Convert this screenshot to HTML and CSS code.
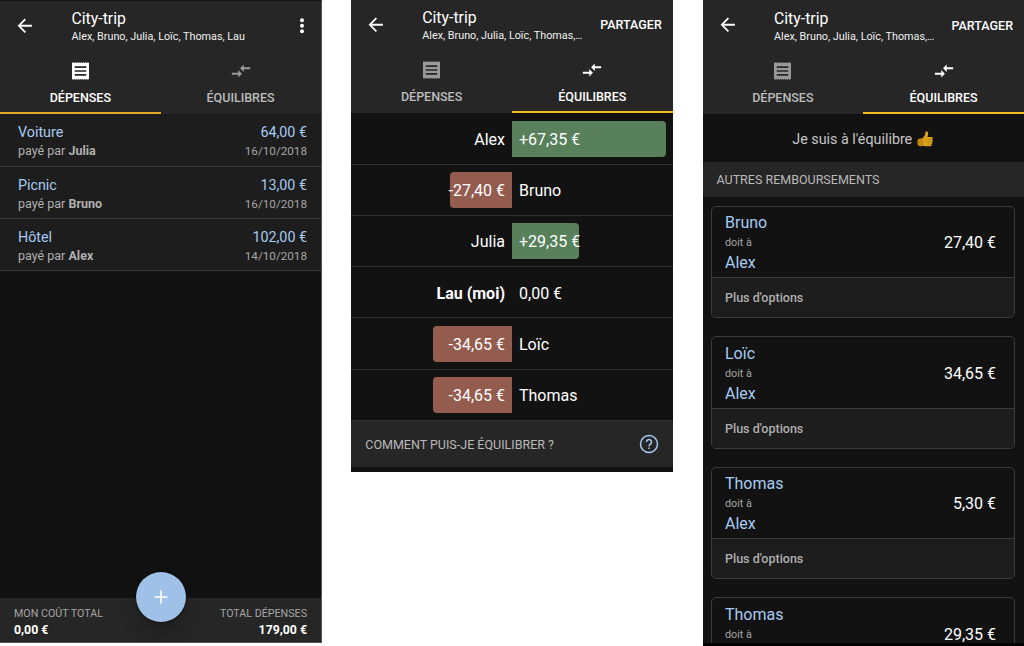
FILE: index.html
```html
<!DOCTYPE html>
<html lang="fr">
<head>
<meta charset="utf-8">
<title>City-trip</title>
<link rel="stylesheet" href="styles.css">
</head>
<body>
<svg class="sprite" aria-hidden="true">
  <symbol id="back" viewBox="0 0 24 24"><path d="M20 11H7.830l5.590-5.590L12 4l-8 8 8 8 1.410-1.410L7.830 13H20v-2z"/></symbol>
  <symbol id="receipt" viewBox="0 0 17 18"><path fill-rule="evenodd" d="M0 .3l.9.8.9-.8.9.8.9-.8 1 .8 1-.8 1 .8.9-.8 1 .8 1-.8 1 .8.9-.8 1 .8 1-.8 1 .8.9-.8.9.8.8-.8v17.400l-.8-.8-.9.8-.9-.8-1 .8-1-.8-1 .8-.9-.8-1 .8-1-.8-1 .8-.9-.8-1 .8-1-.8-1 .8-.9-.8-.9.8-.9-.8-.9.8zM2.700 4.300v1.600h11.600V4.300zM2.700 8.200v1.600h11.600V8.200zM2.700 12.100v1.600h11.600v-1.600z"/></symbol>
  <symbol id="arrows" viewBox="0 0 24 24"><path d="M9.010 14H2v2h7.010v3L13 15l-3.990-4v3zm5.980-1v-3H22V8h-7.010V5L11 9l3.990 4z"/></symbol>
</svg>
<main class="screens">
  <section class="phone phone-expenses">
    <header class="appbar">
      <svg class="back"><use href="#back"/></svg>
      <div class="heading"><h1>City-trip</h1><p>Alex, Bruno, Julia, Loïc, Thomas, Lau</p></div>
      <svg class="more" viewBox="0 0 6 16"><circle cx="3" cy="2.200" r="2"/><circle cx="3" cy="7.700" r="2"/><circle cx="3" cy="13.200" r="2"/></svg>
    </header>
    <nav class="tabs">
      <a class="tab active"><svg class="receipt"><use href="#receipt"/></svg><span>DÉPENSES</span></a>
      <a class="tab"><svg class="arrows"><use href="#arrows"/></svg><span>ÉQUILIBRES</span></a>
    </nav>
    <ul class="expenses">
      <li><div><h2>Voiture</h2><p>payé par <b>Julia</b></p></div><div class="right"><h2>64,00 €</h2><time>16/10/2018</time></div></li>
      <li><div><h2>Picnic</h2><p>payé par <b>Bruno</b></p></div><div class="right"><h2>13,00 €</h2><time>16/10/2018</time></div></li>
      <li><div><h2>Hôtel</h2><p>payé par <b>Alex</b></p></div><div class="right"><h2>102,00 €</h2><time>14/10/2018</time></div></li>
    </ul>
    <footer class="totals">
      <div><p>MON COÛT TOTAL</p><b>0,00 €</b></div>
      <button class="fab"><svg viewBox="0 0 14 14"><path d="M6.200.500h1.600v5.700h5.700v1.600H7.800v5.700H6.200V7.800H.500V6.200h5.700z"/></svg></button>
      <div class="right"><p>TOTAL DÉPENSES</p><b>179,00 €</b></div>
    </footer>
  </section>

  <section class="phone phone-balances">
    <header class="appbar">
      <svg class="back"><use href="#back"/></svg>
      <div class="heading"><h1>City-trip</h1><p>Alex, Bruno, Julia, Loïc, Thomas,…</p></div>
      <span class="share">PARTAGER</span>
    </header>
    <nav class="tabs">
      <a class="tab"><svg class="receipt"><use href="#receipt"/></svg><span>DÉPENSES</span></a>
      <a class="tab active"><svg class="arrows"><use href="#arrows"/></svg><span>ÉQUILIBRES</span></a>
    </nav>
    <ul class="balances">
      <li><span class="cell name">Alex</span><span class="cell"><span class="bar plus" style="width:153.500px">+67,35 €</span></span></li>
      <li><span class="cell"><span class="bar minus" style="width:62.500px">-27,40 €</span></span><span class="cell name">Bruno</span></li>
      <li><span class="cell name">Julia</span><span class="cell"><span class="bar plus" style="width:67px">+29,35 €</span></span></li>
      <li><span class="cell name me">Lau (moi)</span><span class="cell name">0,00 €</span></li>
      <li><span class="cell"><span class="bar minus" style="width:79px">-34,65 €</span></span><span class="cell name">Loïc</span></li>
      <li><span class="cell"><span class="bar minus" style="width:79px">-34,65 €</span></span><span class="cell name">Thomas</span></li>
    </ul>
    <div class="help"><span>COMMENT PUIS-JE ÉQUILIBRER ?</span>
      <svg viewBox="0 0 20 20"><circle cx="10" cy="10" r="8.500"/><path d="M7.500 8.100a2.500 2.500 0 1 1 4.200 1.800C10.600 10.700 10 11 10 12.300M10 13.500v1.500"/></svg>
    </div>
  </section>

  <section class="phone phone-refunds">
    <header class="appbar">
      <svg class="back"><use href="#back"/></svg>
      <div class="heading"><h1>City-trip</h1><p>Alex, Bruno, Julia, Loïc, Thomas,…</p></div>
      <span class="share">PARTAGER</span>
    </header>
    <nav class="tabs">
      <a class="tab"><svg class="receipt"><use href="#receipt"/></svg><span>DÉPENSES</span></a>
      <a class="tab active"><svg class="arrows"><use href="#arrows"/></svg><span>ÉQUILIBRES</span></a>
    </nav>
    <p class="settled">Je suis à l'équilibre
      <svg viewBox="0 0 16 16"><path fill="#d9a21b" d="M5.600 7.200C7 5.600 8 4.400 8.200 3 8.300 1.600 8.300.300 9.400.300c1.600 0 2 1.700 1.700 3.200l-.6 2.400h3.800c1.600 0 1.900 2 .7 2.500 1.200.5 1 2.200-.1 2.500.9.600.6 2-.4 2.300.6.900 0 2-1.100 2-2.800.2-5.600 0-7.400-.8z"/><path fill="#c08a12" d="M.800 8.300c1.500-.9 3.300-1.200 5.200-1v7.600c-1.800.4-3.500.3-5-.3C.2 12.500.2 10.400.800 8.300z"/><path fill="none" stroke="#a97812" stroke-width=".500" d="M10.600 8.400H15M10.600 10.900h4.300M10.600 13.200h3.900"/></svg>
    </p>
    <h3 class="section">AUTRES REMBOURSEMENTS</h3>
    <div class="cards">
      <article class="card"><div class="debt"><div><h2>Bruno</h2><p>doit à</p><h2>Alex</h2></div><strong>27,40 €</strong></div><div class="options">Plus d'options</div></article>
      <article class="card"><div class="debt"><div><h2>Loïc</h2><p>doit à</p><h2>Alex</h2></div><strong>34,65 €</strong></div><div class="options">Plus d'options</div></article>
      <article class="card"><div class="debt"><div><h2>Thomas</h2><p>doit à</p><h2>Alex</h2></div><strong>5,30 €</strong></div><div class="options">Plus d'options</div></article>
      <article class="card"><div class="debt"><div><h2>Thomas</h2><p>doit à</p></div><strong>29,35 €</strong></div></article>
    </div>
  </section>
</main>
</body>
</html>
```
FILE: styles.css
```css
* { box-sizing: border-box; margin: 0; padding: 0; }
body { width: 1024px; height: 646px; overflow: hidden; background: #fff; font-family: Roboto, "Liberation Sans", sans-serif; color: #fff; }
ul { list-style: none; }
h1, h2, h3 { font-weight: 400; }
.sprite { display: block; width: 0; height: 0; }
.screens { display: flex; align-items: flex-start; justify-content: space-between; height: 646px; }
.phone { width: 321.500px; background: #121212; display: flex; flex-direction: column; overflow: hidden; }
.phone-expenses { height: 642.500px; border-top: 1px solid #171717; border-right: 1px solid #555; border-bottom: 1px solid #555; }
.phone-balances { height: 472px; }
.phone-refunds { height: 646px; border-bottom: 3px solid #000; }

.appbar { height: 49px; flex: none; background: #262626; display: flex; align-items: center; padding: 0 11px 0 14px; }
.phone-refunds .appbar { height: 50px; }
.back { width: 21.500px; height: 21.500px; fill: #fff; flex: none; }
.heading { flex: 1; margin-left: 36px; padding-top: 4.500px; white-space: nowrap; }
.phone-balances .heading { margin-left: 35.500px; }
.heading h1 { font-size: 15.800px; line-height: 18px; }
.heading p { font-size: 10.800px; line-height: 17px; color: #f0f0f0; }
.more { width: 6px; height: 16px; fill: #fff; margin-right: 5px; }
.share { font-size: 12.500px; font-weight: 500; }

.tabs { height: 64px; flex: none; background: #262626; display: grid; grid-template-columns: 160.700px 1fr; }
.tab { display: flex; flex-direction: column; align-items: center; color: #bcbcbc; font-size: 12.500px; font-weight: 500; border-bottom: 2px solid #262626; padding-top: 9.500px; gap: 8px; }
.tab svg { height: 22px; fill: #999; }
.tab span { line-height: 15px; }
.tab.active { color: #fff; border-color: #e2a722; }
.phone-balances .active, .phone-refunds .active { border-color: #f3bc1d; }
.tab.active svg { fill: #fff; }
.receipt { width: 17px; padding: 2px 0; }
.arrows { width: 22px; }

.expenses li { height: 52px; background: #1d1d1d; border-bottom: 1px solid #3b3b3b; display: flex; justify-content: space-between; padding: 9px 13.500px 0 18px; }
.expenses li:first-child { height: 52.500px; }
.right { text-align: right; }
.expenses h2 { font-size: 14.300px; line-height: 19px; color: #a6cbf3; }
.expenses p { font-size: 12.500px; line-height: 17px; color: #b0b0b0; }
.expenses time { display: block; font-size: 11.700px; line-height: 19px; color: #a5a5a5; }
.totals { height: 44px; margin-top: auto; flex: none; background: #262626; display: grid; grid-template-columns: 1fr 50px 1fr; padding: 8.500px 13.500px 0 14px; }
.totals p { font-size: 10.700px; line-height: 16px; color: #a5a5a5; white-space: nowrap; }
.totals b { display: block; font-size: 12.300px; line-height: 16px; }
.fab { width: 50px; height: 50px; margin-top: -34px; border: 0; border-radius: 50%; background: #9fc1e7; display: grid; place-items: center; box-shadow: 0 11px 16px rgba(0,0,0,.22), 0 0 2px #000; }
.fab svg { width: 14px; height: 14px; fill: #fff; }

.balances { padding-top: .700px; }
.balances li { height: 51.200px; display: grid; grid-template-columns: 1fr 1fr; align-items: center; font-size: 16px; border-bottom: 1px solid #303030; }
.cell { display: flex; }
.cell:first-child { justify-content: flex-end; }
.name { padding: 1.500px 7px 0; }
.me { font-weight: 700; }
.bar { height: 36px; line-height: 37px; display: flex; white-space: nowrap; padding: 0 7px; }
.plus { background: #57805b; border-radius: 0 4px 4px 0; }
.minus { background: #945c4f; border-radius: 4px 0 0 4px; justify-content: flex-end; }
.help { height: 46.500px; background: #262626; display: flex; align-items: center; justify-content: space-between; padding: 0 13.500px 0 14px; font-size: 12.500px; color: #b9b9b9; }
.help svg { width: 20px; height: 20px; fill: none; stroke: #a6cbf3; stroke-width: 1.500; }

.settled { height: 48.300px; flex: none; display: flex; align-items: center; justify-content: center; gap: 5px; font-size: 14.300px; color: #c6c6c6; padding: 1px 1px 0 0; }
.settled svg { width: 16px; height: 16px; }
.section { height: 34.700px; flex: none; background: #262626; padding-left: 14px; font-size: 12.500px; line-height: 36px; color: #b9b9b9; }
.cards { flex: 1; min-height: 0; display: flex; flex-direction: column; gap: 18.200px; padding: 9px 9.500px 0 8.500px; }
.card { height: 112.200px; flex: none; border: 1px solid #3b3b3b; border-radius: 5px; overflow: hidden; }
.debt { height: 70.500px; display: flex; align-items: center; justify-content: space-between; padding: 1.500px 17.500px 0 13px; }
.card:last-child .debt { align-items: flex-start; padding-top: 6px; }
.card:last-child strong { margin-top: 21px; }
.debt h2 { font-size: 16px; line-height: 21px; color: #a6cbf3; }
.debt p { font-size: 10.800px; line-height: 19px; color: #a5a5a5; }
.debt strong { font-size: 16px; line-height: 19px; font-weight: 400; }
.options { height: 41px; background: #1d1d1d; border-top: 1px solid #3b3b3b; padding-left: 13px; font-size: 12.500px; line-height: 40px; font-weight: 500; color: #b0b0b0; }
```
